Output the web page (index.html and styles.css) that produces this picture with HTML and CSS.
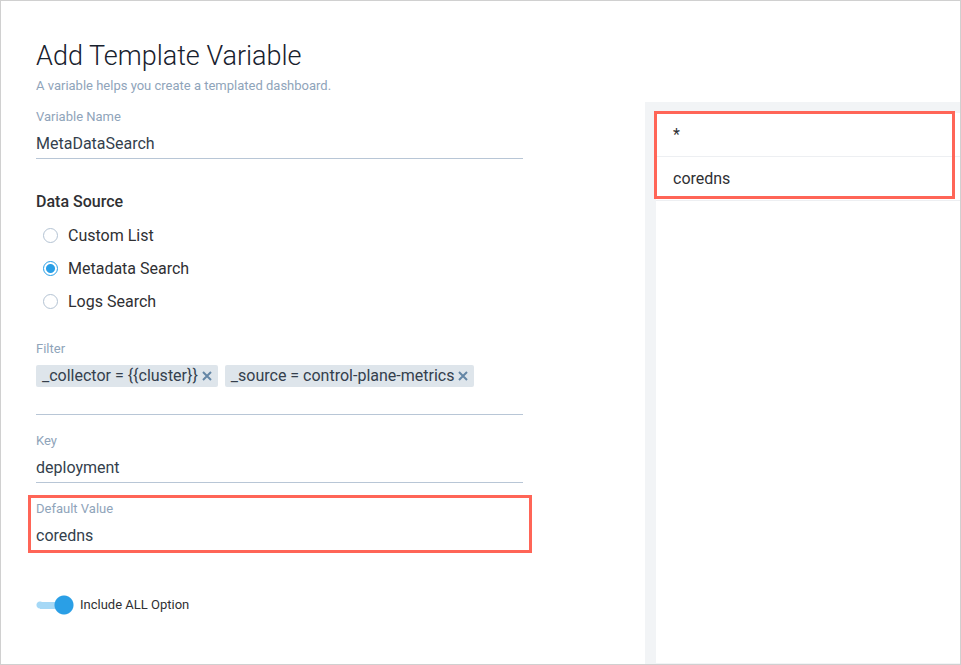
FILE: index.html
```html
<!DOCTYPE html>
<html lang="en">
<head>
<meta charset="utf-8">
<meta name="viewport" content="width=device-width, initial-scale=1">
<title>Add Template Variable</title>
<link rel="stylesheet" href="styles.css">
</head>
<body>
<main class="dialog">
  <form class="form">
    <h1 class="title">Add Template Variable</h1>
    <p class="subtitle">A variable helps you create a templated dashboard.</p>

    <div class="field">
      <label class="label" for="name">Variable Name</label>
      <input class="input" id="name" type="text" value="MetaDataSearch">
    </div>

    <fieldset class="sources">
      <legend class="legend">Data Source</legend>
      <label class="option"><input class="radio" type="radio" name="source">Custom List</label>
      <label class="option"><input class="radio" type="radio" name="source" checked>Metadata Search</label>
      <label class="option"><input class="radio" type="radio" name="source">Logs Search</label>
    </fieldset>

    <div class="field">
      <span class="label" id="filter-label">Filter</span>
      <ul class="chips" aria-labelledby="filter-label">
        <li class="chip">_collector = {{cluster}}
          <button class="remove" type="button" aria-label="Remove collector filter"><svg viewBox="0 0 10 10" width="10" height="10"><path d="M1 1 9 9M9 1 1 9"/></svg></button>
        </li>
        <li class="chip">_source = control-plane-metrics
          <button class="remove" type="button" aria-label="Remove source filter"><svg viewBox="0 0 10 10" width="10" height="10"><path d="M1 1 9 9M9 1 1 9"/></svg></button>
        </li>
      </ul>
    </div>

    <div class="field">
      <label class="label" for="key">Key</label>
      <input class="input" id="key" type="text" value="deployment">
    </div>

    <div class="field marked">
      <label class="label" for="default">Default Value</label>
      <input class="input" id="default" type="text" value="coredns">
    </div>

    <label class="toggle"><input class="switch" type="checkbox" role="switch" checked>Include ALL Option</label>
  </form>

  <section class="preview" aria-label="Values">
    <div class="sheet">
      <ul class="values">
        <li class="value">*</li>
        <li class="value">coredns</li>
      </ul>
    </div>
  </section>
</main>
</body>
</html>
```

FILE: styles.css
```css
* {
  box-sizing: border-box;
}

body {
  margin: 0;
  background: #fff;
  color: #2f3033;
  font: 16px/20px Roboto, "Liberation Sans", sans-serif;
}

ul {
  margin: 0;
  padding: 0;
  list-style: none;
}

.dialog {
  display: grid;
  grid-template-columns: minmax(0, 1fr) 315px;
  min-height: 100vh;
  border: 1px solid #d0d0d0;
}

.form {
  display: flex;
  flex-direction: column;
  gap: 18px;
  padding: 39px 122px 40px 35px;
}

.title {
  margin: 0;
  color: #18212e;
  font-size: 27px;
  font-weight: 300;
  line-height: 32px;
}

.subtitle {
  margin: -14px 0 -5px;
  color: #8fa4ba;
  font-size: 13px;
}

.field {
  position: relative;
  display: flex;
  flex-direction: column;
  gap: 4px;
}

.label {
  color: #8fa4ba;
  font-size: 13px;
  line-height: 16px;
}

.input {
  width: 100%;
  height: 30px;
  padding: 0;
  border: 0;
  border-bottom: 1px solid #b8c6d6;
  border-radius: 0;
  outline: 0;
  background: transparent;
  color: #343f4d;
  font: inherit;
}

.sources {
  display: flex;
  flex-direction: column;
  margin: 15px 0 5px;
  padding: 0;
  border: 0;
}

.legend {
  margin-bottom: 7px;
  padding: 0;
  font-weight: 500;
}

.option {
  display: flex;
  align-items: center;
  gap: 10px;
  height: 33px;
  padding-left: 7px;
}

.radio {
  flex: none;
  width: 15px;
  height: 15px;
  margin: 0;
  border: 1px solid #b4c3d3;
  border-radius: 50%;
  background: #fff;
  appearance: none;
}

.radio:checked {
  border-color: #2a9fe6;
  background: radial-gradient(circle, #2a9fe6 4px, #fff 5px);
}

.chips {
  display: flex;
  flex-wrap: wrap;
  gap: 7px;
  padding: 4px 0 27px;
  border-bottom: 1px solid #b8c6d6;
}

.chip {
  display: flex;
  align-items: center;
  gap: 4px;
  height: 22px;
  padding: 0 6px;
  border-radius: 2px;
  background: #dee5eb;
  color: #343f4d;
}

.remove {
  display: flex;
  padding: 0;
  border: 0;
  background: none;
}

.remove svg {
  fill: none;
  stroke: #6486a6;
  stroke-width: 2;
}

.marked::after,
.values::after {
  content: "";
  position: absolute;
  border: 3px solid #ff6557;
  pointer-events: none;
}

.marked::after {
  inset: -6px -9px -2px -8px;
}

.toggle {
  display: flex;
  align-items: center;
  align-self: flex-start;
  gap: 6px;
  margin-top: 26px;
  font-size: 13px;
}

.switch {
  width: 38px;
  height: 20px;
  margin: 0;
  background:
    radial-gradient(circle at 28px 10px, #2a9fe6 9px, transparent 10px),
    linear-gradient(#a5d8f6, #a5d8f6) 4px 7px / 24px 7px no-repeat,
    radial-gradient(circle at 4px 10px, #a5d8f6 3px, transparent 4px);
  appearance: none;
}

.preview {
  display: flex;
  margin-top: 101px;
  padding: 11px 0 1px 11px;
  background: #f2f4f6;
}

.sheet {
  flex: 1;
  background: #fff;
}

.values {
  position: relative;
}

.value {
  height: 44px;
  padding: 12px 17px;
  border-bottom: 1px solid #edeff2;
}

.values::after {
  inset: -2px 5px 2px -2px;
}
```
